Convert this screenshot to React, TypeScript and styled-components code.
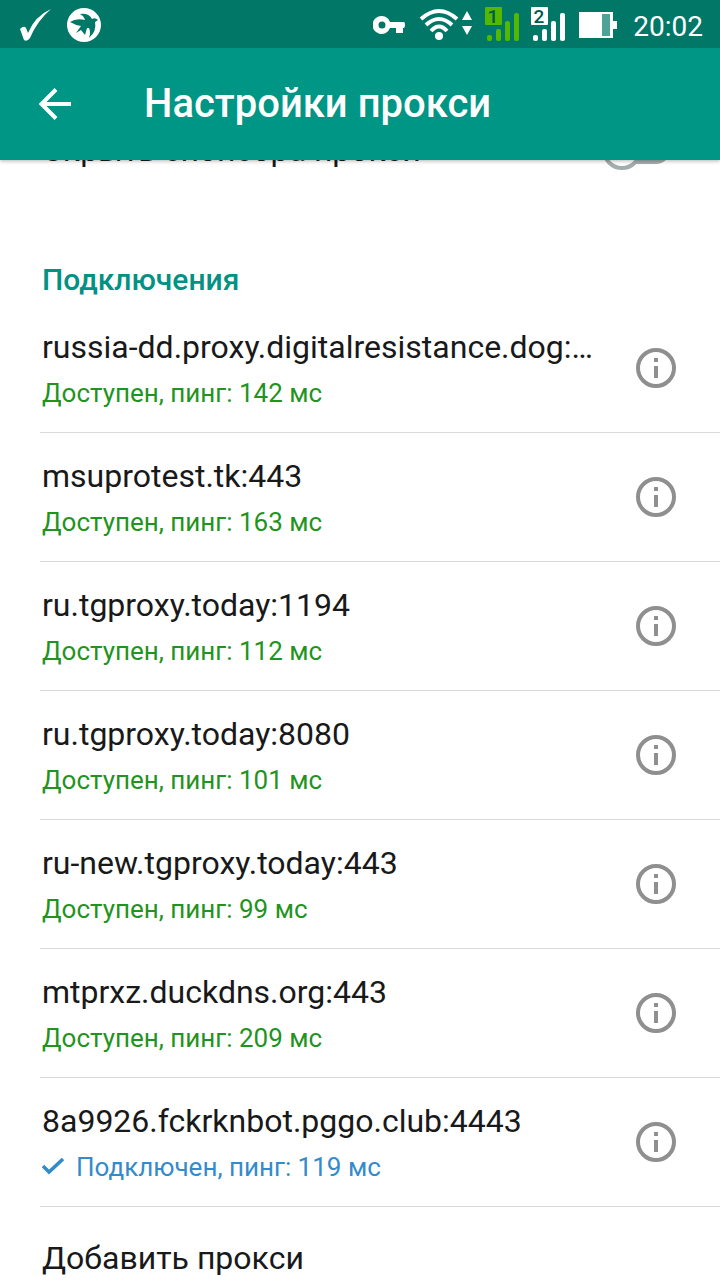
import React from "react";
import styled, { createGlobalStyle } from "styled-components";

const GlobalStyle = createGlobalStyle`
  *, *::before { box-sizing: border-box; }
  body { margin: 0; background: #fff; font-family: Roboto, "Noto Sans", sans-serif; }
`;

const Screen = styled.div`
  display: flex;
  flex-direction: column;
  height: 100vh;
  overflow: hidden;
  background: #fff;
`;

const StatusBar = styled.div`
  display: flex;
  flex: none;
  align-items: center;
  justify-content: space-between;
  height: 48px;
  padding: 2px 17px 0 20px;
  background: #007767;
  color: #fff;
  position: relative;
  z-index: 2;
`;

const StatusGroup = styled.div<{ $gap: number }>`
  display: flex;
  align-items: center;
  gap: ${(p) => p.$gap}px;
`;

const Clock = styled.time`
  font-size: 28px;
  line-height: 32px;
  padding: 4px 0 0 4px;
`;

const AppBar = styled.header`
  display: flex;
  flex: none;
  align-items: center;
  gap: 72px;
  height: 112px;
  padding: 0 38px;
  background: #009685;
  color: #fff;
  position: relative;
  z-index: 1;
  box-shadow: 0 1px 4px rgba(0, 0, 0, 0.3);
`;

const IconButton = styled.button`
  display: flex;
  flex: none;
  padding: 0;
  border: 0;
  background: none;
  color: inherit;
  cursor: pointer;
`;

const Title = styled.h1`
  margin: 0;
  font-size: 40px;
  line-height: 48px;
  font-weight: 500;
  white-space: nowrap;
`;

const Content = styled.main`
  flex: 1;
  min-height: 0;
`;

const SwitchRow = styled.label`
  display: flex;
  align-items: center;
  justify-content: space-between;
  height: 96px;
  margin-top: -58px;
  padding: 0 50px 0 42px;
  font-size: 32px;
  line-height: 40px;
  color: #18191a;
`;

const Switch = styled.input`
  appearance: none;
  display: flex;
  flex: none;
  align-items: center;
  width: 56px;
  height: 28px;
  margin: 0;
  background: #a4adad;
  border-radius: 14px;

  &::before {
    content: "";
    flex: none;
    width: 40px;
    height: 40px;
    margin-left: -12px;
    border: 4px solid #a4adad;
    border-radius: 50%;
    background: #fff;
  }
`;

const SectionTitle = styled.h2`
  margin: 64px 0 0;
  padding: 0 42px 6px;
  font-size: 30px;
  line-height: 36px;
  font-weight: 500;
  color: #009283;
`;

const ProxyList = styled.ul`
  margin: 0;
  padding: 0;
  list-style: none;
`;

const ProxyRow = styled.li`
  display: flex;
  align-items: center;
  justify-content: space-between;
  gap: 40px;
  height: 129px;
  margin-left: 40px;
  padding: 0 44px 0 2px;
  border-bottom: 1px solid #d9d9d9;
  color: #8f8f8f;
`;

const ProxyText = styled.div`
  min-width: 0;
  padding-bottom: 2px;
`;

const Address = styled.div`
  overflow: hidden;
  text-overflow: ellipsis;
  white-space: nowrap;
  font-size: 32px;
  line-height: 44px;
  color: #18191a;
`;

const State = styled.div<{ $active?: boolean }>`
  display: flex;
  align-items: center;
  gap: 12px;
  margin-top: 8px;
  font-size: 26px;
  line-height: 32px;
  color: ${(p) => (p.$active ? "#338bcb" : "#1f9420")};
`;

const AddButton = styled.button`
  display: block;
  width: 100%;
  height: 102px;
  padding: 0 42px;
  border: 0;
  background: none;
  font-family: inherit;
  font-size: 32px;
  line-height: 40px;
  text-align: left;
  color: #18191a;
  cursor: pointer;
`;

const TickIcon = () => (
  <svg width="32" height="34" viewBox="0 0 32 34" fill="#fff" aria-hidden="true">
    <path d="M0 21 Q4 17 6 20 L8 25 Q15 8 31 1 Q17 13 10 30 Q7 34 4 32 Z" />
  </svg>
);

const BirdIcon = () => (
  <svg width="34" height="34" viewBox="0 0 34 34" aria-hidden="true">
    <circle cx="17" cy="17" r="17" fill="#fff" />
    <path
      fill="#007767"
      d="M3 14 Q9 10 18 12 Q17 8 13 6 Q22 5 25 11 Q28 9 31 12 L28 14 Q30 23 22 30 Q24 24 22 20 L20 20 L18 27 L14 22 L9 25 L14 18 Q8 17 3 14 Z"
    />
  </svg>
);

const KeyIcon = () => (
  <svg width="32" height="20" viewBox="0 0 32 20" aria-hidden="true">
    <path
      fill="#fff"
      fillRule="evenodd"
      d="M9 1a9 9 0 1 0 8 12h6v5h7v-5h1q1 0 1-3t-1-3H17A9 9 0 0 0 9 1Zm0 5.5a3.5 3.5 0 1 1 0 7a3.5 3.5 0 0 1 0-7Z"
    />
  </svg>
);

const WifiIcon = () => (
  <svg width="54" height="34" viewBox="0 0 54 34" aria-hidden="true">
    <g fill="none" stroke="#fff" strokeWidth="4">
      <path d="M2 11Q20 -5 38 11" />
      <path d="M7 17Q20 5 33 17" />
      <path d="M12 23Q20 14 28 23" />
    </g>
    <circle cx="20" cy="28" r="4" fill="#fff" />
    <path d="M43 12l5-9 5 9zM43 18h10l-5 9z" fill="#fff" />
  </svg>
);

const SignalIcon = ({ sim, color }: { sim: number; color: string }) => (
  <svg width="36" height="36" viewBox="0 0 36 36" role="img" aria-label={`SIM ${sim}`}>
    <rect x="0" y="0" width="17" height="18" rx="1" fill={color} />
    <text
      x="8"
      y="16"
      textAnchor="middle"
      fontFamily="Roboto, sans-serif"
      fontSize="19"
      fontWeight="500"
      fill="#00594e"
    >
      {sim}
    </text>
    <g fill={color}>
      <rect x="2" y="28" width="5" height="6" rx="2" />
      <rect x="11" y="22" width="5" height="12" rx="2" />
      <rect x="20" y="14" width="5" height="20" rx="2" />
      <rect x="29" y="6" width="5" height="28" rx="2" />
    </g>
  </svg>
);

const BatteryIcon = () => (
  <svg width="38" height="26" viewBox="0 0 38 26" aria-hidden="true">
    <path d="M0 0h34v9h4v8h-4v9H0z" fill="#fff" />
    <path d="M23 2h8v22h-8z" fill="#4fa297" />
  </svg>
);

const BackIcon = () => (
  <svg width="34" height="34" viewBox="0 0 34 34" fill="none" stroke="#fff" strokeWidth="4" aria-hidden="true">
    <path d="M33 17H5M18 2.5L3.5 17L18 31.5" />
  </svg>
);

const InfoIcon = () => (
  <svg width="40" height="40" viewBox="0 0 40 40" aria-hidden="true">
    <circle cx="20" cy="20" r="18" fill="none" stroke="currentColor" strokeWidth="4" />
    <path d="M18 10h4v4h-4zM18 18h4v12h-4z" fill="currentColor" />
  </svg>
);

const CheckIcon = () => (
  <svg width="22" height="18" viewBox="0 0 22 18" fill="none" stroke="currentColor" strokeWidth="3.5" aria-hidden="true">
    <path d="M1 8l6 6L21 1" />
  </svg>
);

const proxies = [
  { address: "russia-dd.proxy.digitalresistance.dog:443", ping: 142 },
  { address: "msuprotest.tk:443", ping: 163 },
  { address: "ru.tgproxy.today:1194", ping: 112 },
  { address: "ru.tgproxy.today:8080", ping: 101 },
  { address: "ru-new.tgproxy.today:443", ping: 99 },
  { address: "mtprxz.duckdns.org:443", ping: 209 },
  { address: "8a9926.fckrknbot.pggo.club:4443", ping: 119, active: true },
];

export default function App() {
  return (
    <Screen>
      <GlobalStyle />
      <StatusBar>
        <StatusGroup $gap={15}>
          <TickIcon />
          <BirdIcon />
        </StatusGroup>
        <StatusGroup $gap={12}>
          <StatusGroup $gap={14}>
            <KeyIcon />
            <WifiIcon />
          </StatusGroup>
          <StatusGroup $gap={10}>
            <SignalIcon sim={1} color="#55b800" />
            <SignalIcon sim={2} color="#fff" />
          </StatusGroup>
          <BatteryIcon />
          <Clock>20:02</Clock>
        </StatusGroup>
      </StatusBar>
      <AppBar>
        <IconButton type="button" aria-label="Назад">
          <BackIcon />
        </IconButton>
        <Title>Настройки прокси</Title>
      </AppBar>
      <Content>
        <SwitchRow>
          Скрыть спонсора прокси
          <Switch type="checkbox" role="switch" />
        </SwitchRow>
        <SectionTitle>Подключения</SectionTitle>
        <ProxyList>
          {proxies.map((p) => (
            <ProxyRow key={p.address}>
              <ProxyText>
                <Address>{p.address}</Address>
                <State $active={p.active}>
                  {p.active && <CheckIcon />}
                  {`${p.active ? "Подключен" : "Доступен"}, пинг: ${p.ping} мс`}
                </State>
              </ProxyText>
              <IconButton type="button" aria-label="Сведения о прокси">
                <InfoIcon />
              </IconButton>
            </ProxyRow>
          ))}
        </ProxyList>
        <AddButton type="button">Добавить прокси</AddButton>
      </Content>
    </Screen>
  );
}
